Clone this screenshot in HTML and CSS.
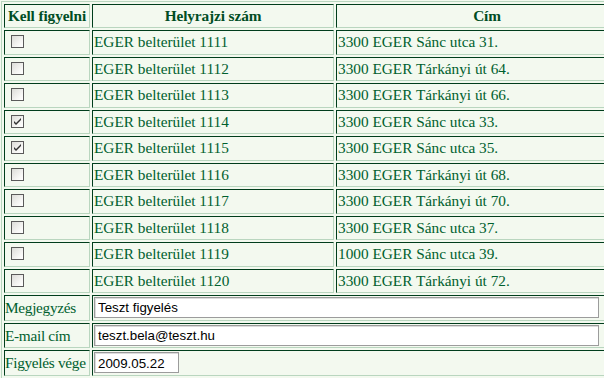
FILE: index.html
```html
<!DOCTYPE html>
<html lang="hu">
<head>
    <meta charset="UTF-8">
    <title>Figyelés</title>
    <link rel="stylesheet" href="styles.css">
</head>
<body>

<table class="watch">
    <tr>
        <th class="col-check">Kell figyelni</th>
        <th class="col-lot">Helyrajzi szám</th>
        <th class="col-addr">Cím</th>
    </tr>
    <tr><td><span class="box"></span></td><td>EGER belterület 1111</td><td>3300 EGER Sánc utca 31.</td></tr>
    <tr><td><span class="box"></span></td><td>EGER belterület 1112</td><td>3300 EGER Tárkányi út 64.</td></tr>
    <tr><td><span class="box"></span></td><td>EGER belterület 1113</td><td>3300 EGER Tárkányi út 66.</td></tr>
    <tr><td><span class="box checked"><svg width="9" height="9" viewBox="0 0 9 9"><path d="M1 4 L3 6 L8 1 L8 3 L3 8 L1 6 Z" fill="#333"/></svg></span></td><td>EGER belterület 1114</td><td>3300 EGER Sánc utca 33.</td></tr>
    <tr><td><span class="box checked"><svg width="9" height="9" viewBox="0 0 9 9"><path d="M1 4 L3 6 L8 1 L8 3 L3 8 L1 6 Z" fill="#333"/></svg></span></td><td>EGER belterület 1115</td><td>3300 EGER Sánc utca 35.</td></tr>
    <tr><td><span class="box"></span></td><td>EGER belterület 1116</td><td>3300 EGER Tárkányi út 68.</td></tr>
    <tr><td><span class="box"></span></td><td>EGER belterület 1117</td><td>3300 EGER Tárkányi út 70.</td></tr>
    <tr><td><span class="box"></span></td><td>EGER belterület 1118</td><td>3300 EGER Sánc utca 37.</td></tr>
    <tr><td><span class="box"></span></td><td>EGER belterület 1119</td><td>1000 EGER Sánc utca 39.</td></tr>
    <tr><td><span class="box"></span></td><td>EGER belterület 1120</td><td>3300 EGER Tárkányi út 72.</td></tr>
    <tr class="form-row">
        <td class="label">Megjegyzés</td>
        <td colspan="2"><input type="text" class="field wide" value="Teszt figyelés"></td>
    </tr>
    <tr class="form-row">
        <td class="label">E-mail cím</td>
        <td colspan="2"><input type="text" class="field wide" value="teszt.bela@teszt.hu"></td>
    </tr>
    <tr class="form-row">
        <td class="label">Figyelés vége</td>
        <td colspan="2"><input type="text" class="field date" value="2009.05.22"></td>
    </tr>
</table>

</body>
</html>
```

FILE: styles.css
```css
body {
    margin: 0;
    padding: 1px;
    background-color: #f3f9ef;
    font-family: "Liberation Serif", "Times New Roman", serif;
    font-size: 15.3px;
    color: #00602e;
    overflow: hidden;
}

.watch {
    border-collapse: separate;
    border-spacing: 2px;
    border: 1px solid #b9d6bf;
    table-layout: fixed;
    width: 640px;
}

.watch th,
.watch td {
    border: 1px solid;
    border-color: #003d1c #b9d6bf #b9d6bf #003d1c;
    padding: 2px 0 2px 1px;
    line-height: 18.45px;
    text-align: left;
    white-space: nowrap;
}

.watch th {
    text-align: center;
    font-weight: bold;
    color: #004d24;
    padding: 2px 0;
    letter-spacing: -0.1px;
}

.col-check {
    width: 84px;
}

.col-lot {
    width: 240px;
}

.col-addr {
    width: 300px;
}

.box {
    display: inline-block;
    box-sizing: border-box;
    width: 13px;
    height: 13px;
    margin: 0 0 0 5px;
    border: 1px solid #5a5a5a;
    background: linear-gradient(135deg, #dcdcd8 0%, #f8f8f6 70%, #ffffff 100%);
    vertical-align: -1px;
    position: relative;
}

.box svg {
    position: absolute;
    left: 1px;
    top: 1px;
}

.watch .form-row td {
    padding: 1px 0 1.7px 1px;
    line-height: 21px;
}

.watch .form-row .label {
    padding-left: 0;
    letter-spacing: -0.3px;
}

.field {
    display: block;
    box-sizing: border-box;
    height: 21px;
    margin: 0;
    padding: 1px 3px 0;
    border: 1px solid #9c9c9c;
    box-shadow: inset 1px 1px 0 #dcdcdc;
    background: #ffffff;
    font-family: "Liberation Sans", Tahoma, sans-serif;
    font-size: 13.3px;
    color: #000000;
}

.wide {
    width: 505px;
}

.date {
    width: 85px;
}
```
